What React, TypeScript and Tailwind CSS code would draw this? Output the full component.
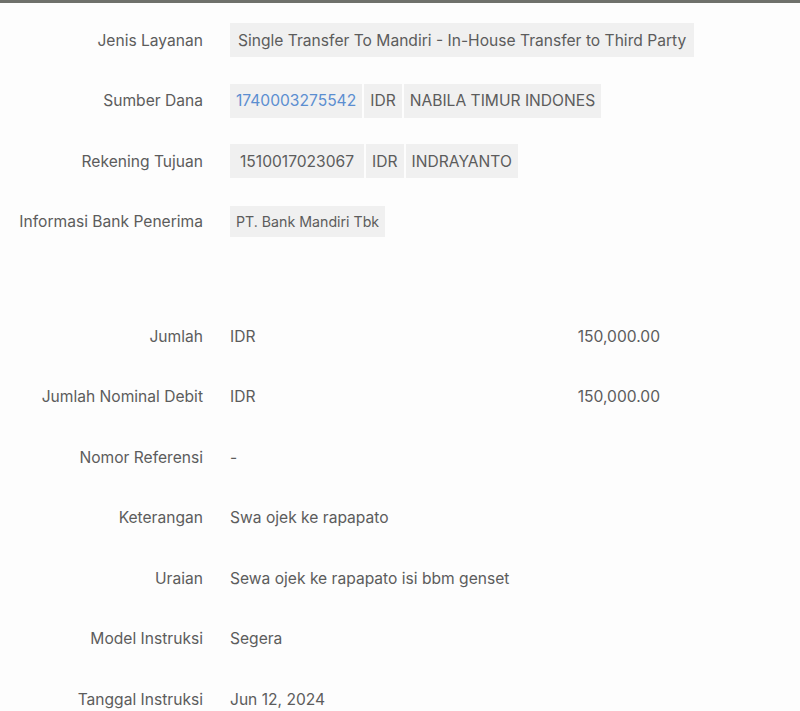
import React from "react";

type Row = {
  label: string;
  value: React.ReactNode;
};

function Chip({
  children,
  className = "px-2",
  small = false,
  link = false,
}: {
  children: React.ReactNode;
  className?: string;
  small?: boolean;
  link?: boolean;
}) {
  return (
    <span
      className={`inline-flex items-center bg-[#f0f0f0] ${
        small ? "h-[31px] text-[14.2px]" : "h-[34px] text-[15.6px]"
      } ${link ? "text-[#5b8ed0]" : "text-[#5c5c5c]"} ${className}`}
    >
      {children}
    </span>
  );
}

function Amount({ value }: { value: string }) {
  return (
    <div className="flex w-[430px] justify-between">
      <span>IDR</span>
      <span>{value}</span>
    </div>
  );
}

const account: Row[] = [
  {
    label: "Jenis Layanan",
    value: (
      <Chip>Single Transfer To Mandiri - In-House Transfer to Third Party</Chip>
    ),
  },
  {
    label: "Sumber Dana",
    value: (
      <div className="flex gap-[2px]">
        <Chip link className="px-[6px]">
          1740003275542
        </Chip>
        <Chip className="px-[6px]">IDR</Chip>
        <Chip className="px-[6px]">NABILA TIMUR INDONES</Chip>
      </div>
    ),
  },
  {
    label: "Rekening Tujuan",
    value: (
      <div className="flex gap-[2px]">
        <Chip className="px-[10px]">1510017023067</Chip>
        <Chip className="px-[6px]">IDR</Chip>
        <Chip className="px-[6px]">INDRAYANTO</Chip>
      </div>
    ),
  },
  {
    label: "Informasi Bank Penerima",
    value: (
      <Chip small className="px-[6px]">
        PT. Bank Mandiri Tbk
      </Chip>
    ),
  },
];

const details: Row[] = [
  { label: "Jumlah", value: <Amount value="150,000.00" /> },
  { label: "Jumlah Nominal Debit", value: <Amount value="150,000.00" /> },
  { label: "Nomor Referensi", value: "-" },
  { label: "Keterangan", value: "Swa ojek ke rapapato" },
  { label: "Uraian", value: "Sewa ojek ke rapapato isi bbm genset" },
  { label: "Model Instruksi", value: "Segera" },
  { label: "Tanggal Instruksi", value: "Jun 12, 2024" },
];

function DetailRows({ rows }: { rows: Row[] }) {
  return (
    <>
      {rows.map((row) => (
        <div key={row.label} className="flex h-[60.5px] items-center">
          <div className="w-[203px] shrink-0 text-right text-[15.6px] text-[#5c5c5c]">
            {row.label}
          </div>
          <div className="ml-[27px] text-[15.6px] text-[#5c5c5c]">
            {row.value}
          </div>
        </div>
      ))}
    </>
  );
}

export default function App() {
  return (
    <div
      className="min-h-[711px] w-[800px] bg-[#fdfdfd] border-t-[3px] border-[#6f716b] pt-[7px]"
      style={{ fontFamily: "Inter, 'Noto Sans', sans-serif" }}
    >
      <DetailRows rows={account} />
      <div className="h-[54px]" />
      <DetailRows rows={details} />
    </div>
  );
}
